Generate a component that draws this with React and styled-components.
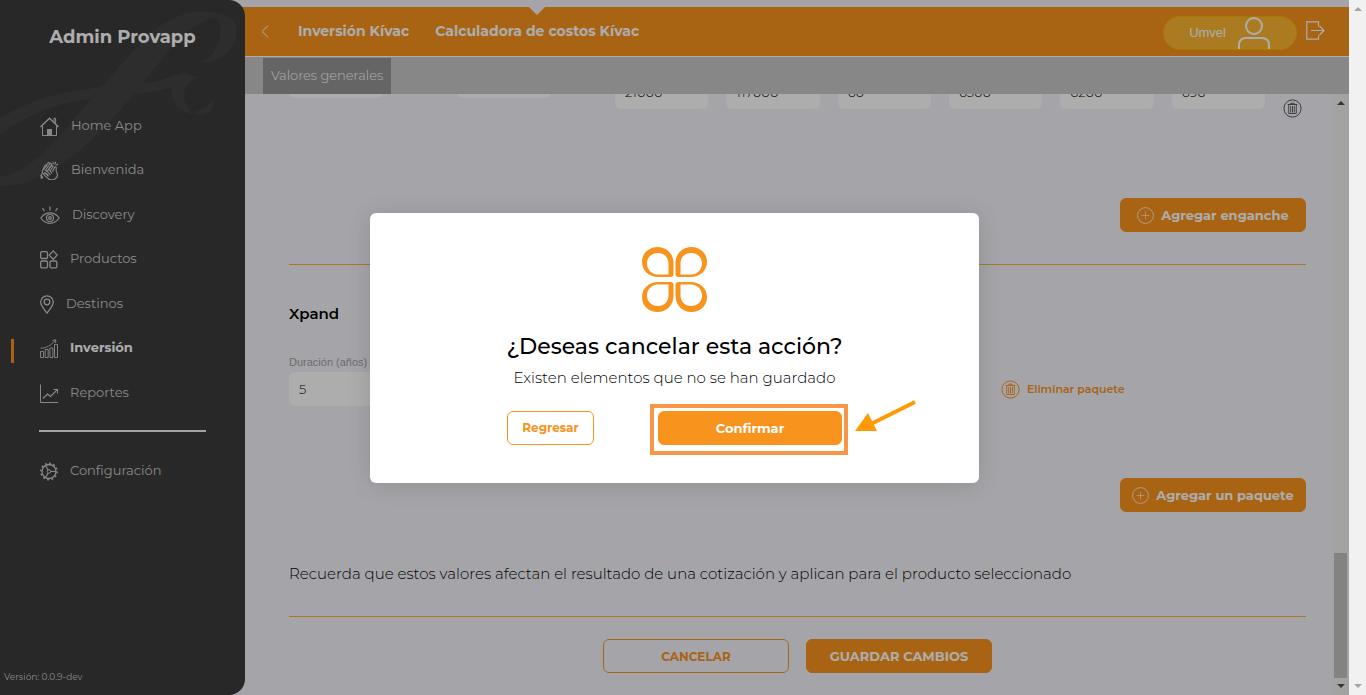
import React from 'react'
import styled, { createGlobalStyle } from 'styled-components'

const orange = '#f8931d'

const navItems = [
  { label: 'Home App', icon: 'home' },
  { label: 'Bienvenida', icon: 'hands' },
  { label: 'Discovery', icon: 'eye' },
  { label: 'Productos', icon: 'grid' },
  { label: 'Destinos', icon: 'pin' },
  { label: 'Inversión', icon: 'bars', active: true },
  { label: 'Reportes', icon: 'report' },
]

const baseValues = ['', '']
const engancheValues = ['21000', '117000', '60', '6500', '6200', '690']

const icons = {
  home: (
    <svg width="19" height="19" viewBox="0 0 19 19" fill="none" stroke="currentColor">
      <path d="M0.5 10 9.5 1.2l9 8.8" strokeWidth="1.4" />
      <path d="M2.5 9v9.5h14V9" />
      <path d="M14 5V1.2h1.6v5.4" />
      <rect x="7" y="12" width="5" height="7" fill="currentColor" stroke="none" />
    </svg>
  ),
  hands: (
    <svg width="19" height="19" viewBox="0 0 19 19" fill="none" stroke="currentColor" strokeWidth="1.1" strokeLinecap="round" strokeLinejoin="round">
      <path d="M1 14.5c1-1 1.500-2 1.500-4 0-1 .3-2 .8-2.800L5 4.500c.8-1.300 2.400-.5 1.800.8M6.500 4 7.800 2.200c.8-1.200 2.500-.3 2 .9M9.200 3.500l.6-.6c1-1 2.500.1 1.700 1.300L9 8" />
      <path d="M5.200 9.500 9 4.500M3.600 8.500l3-4M7 10.500l4-5.300c1-1.200 2.300-.2 1.600 1l-2.200 3.300M12.700 10.500l1.600-3.800c.6-1.400 2.300-.7 2 .6-.5 2-.1 3.700.8 5.200 1 2.200-.6 5.400-4 6.200-2.700.6-4.300-.4-5.400-1.600l-3.600-3.300c-1.200-1.200.2-2.500 1.400-1.700l2.300 1.700" />
      <path d="m5 12 3.300 3M6.200 9.700l4 4M8.500 8.500l3.400 3.700M1.200 14.200l1.500 2.600-1.500.5z" />
      <path d="m13 1 .4 1.800M15.500 1.200 15 3M17.600 3.300l-1.500.7" />
    </svg>
  ),
  eye: (
    <svg width="20" height="19" viewBox="0 0 20 19" fill="none" stroke="currentColor" strokeWidth="1.200">
      <path d="M.8 12C3.500 8.300 6.500 6.800 10 6.800s6.500 1.500 9.200 5.200c-2.700 3.700-5.700 5.300-9.200 5.300S3.500 15.700.8 12z" />
      <circle cx="10" cy="12" r="3.500" />
      <circle cx="10" cy="12" r="1.300" />
      <path d="M10 .5v4M2.500 2l2 3.200M17.500 2l-2 3.200" />
    </svg>
  ),
  grid: (
    <svg width="18" height="19" viewBox="0 0 18 19" fill="none" stroke="currentColor" strokeWidth="1.300">
      <rect x=".7" y="1.700" width="6.800" height="6.800" rx="1.200" />
      <rect x=".7" y="11" width="6.800" height="6.800" rx="1.200" />
      <rect x="10" y="11" width="6.800" height="6.800" rx="1.200" />
      <path d="m13.200.9 4 4.200-4 4.200-4-4.200z" strokeLinejoin="round" />
    </svg>
  ),
  pin: (
    <svg width="14" height="19" viewBox="0 0 14 19" fill="none" stroke="currentColor" strokeWidth="1.300">
      <path d="M7 18C4 14 .7 10.600.7 7.200a6.300 6.300 0 0 1 12.600 0C13.300 10.600 10 14 7 18z" />
      <circle cx="7" cy="7" r="2.800" />
    </svg>
  ),
  bars: (
    <svg width="18" height="19" viewBox="0 0 18 19" fill="none" stroke="currentColor" strokeWidth=".9">
      <path d="M.5 12.500h3v6h-3zM5.200 10.500h3v8h-3zM9.900 9h3v9.500h-3zM14.500 5.500h3v13h-3z" />
      <path d="M.5 9.300c6-.2 10.500-3 15-8M12.300 1.500l3.500-.7-.2 3.400" />
    </svg>
  ),
  report: (
    <svg width="18" height="19" viewBox="0 0 18 19" fill="none" stroke="currentColor">
      <path d="M.5.500v18H18" />
      <path d="m3 14.500 4.500-4.500 3 2.500 7-7M13.500 5.500h4v4" strokeWidth="1.100" />
    </svg>
  ),
  gear: (
    <svg width="18" height="19" viewBox="0 0 18 19" fill="none" stroke="currentColor">
      <circle cx="9" cy="9.500" r="7" strokeWidth="1.300" />
      <circle cx="9" cy="9.500" r="8.200" strokeWidth="1.500" strokeDasharray="1.800 2.490" />
      <circle cx="9" cy="9.500" r="1.700" />
      <path d="M10.700 9.500H16M8.100 8 5.500 3.500M8.100 11l-2.600 4.500" strokeWidth="1.200" />
    </svg>
  ),
}

const TrashIcon = () => (
  <svg width="19" height="19" viewBox="0 0 19 19" fill="none" stroke="currentColor" aria-hidden="true">
    <circle cx="9.500" cy="9.500" r="8.600" />
    <path d="M4.800 5.500h9.400M7.800 5.300V4.200h3.400v1.100" />
    <path d="M5.700 6v8.500h7.600V6M7.700 7v6.500M9.500 7v6.500M11.300 7v6.500" strokeWidth=".9" />
  </svg>
)

const PlusIcon = () => (
  <svg width="17" height="17" viewBox="0 0 17 17" fill="none" stroke="currentColor" aria-hidden="true">
    <circle cx="8.500" cy="8.500" r="7.900" strokeWidth=".8" />
    <path d="M8.500 4.500v8M4.500 8.500h8" strokeWidth=".6" />
  </svg>
)

const petal = 'M28.500 30H16C7 30 0 23.500 0 15 0 6 7 0 15.800 0S31.500 7 31.500 16v11c0 2-1 3-3 3zM26.500 27.500V17C26.500 10.500 22.500 6 16 6S5 10.500 5 16.500s4.500 11 11 11z'

const CloverLogo = () => (
  <svg width="65" height="65" viewBox="0 0 65 65" fill={orange} fillRule="evenodd" aria-hidden="true">
    <path d={petal} />
    <path d={petal} transform="translate(65 0) scale(-1 1)" />
    <path d={petal} transform="translate(0 65) scale(1 -1)" />
    <path d={petal} transform="translate(65 65) scale(-1 -1)" />
  </svg>
)

const App = () => {
  return (
    <Page>
      <GlobalStyle />
      <Screen>
        <Sidebar>
          <Swash viewBox="0 0 735 560" aria-hidden="true">
            <path d="M0 530C110 515 200 380 300 265L430 120C500 50 580 22 650 38 712 50 712 85 710 100 700 160 650 192 595 190 650 170 675 110 655 52 560 60 480 190 400 285 300 400 160 560 0 558z" />
            <path d="M0 355C100 295 200 270 305 262L270 297C150 310 60 360 0 403z" />
            <path d="M425 252C470 248 500 235 550 217L597 233C550 240 535 300 580 342 530 335 510 300 515 260 480 272 440 278 402 283z" />
            <path d="M580 335C615 330 635 310 640 290 645 325 630 345 600 345z" />
          </Swash>
          <Brand>Admin Provapp</Brand>
          <Nav>
            {navItems.map((item) => (
              <NavLink href="#" key={item.label} $active={item.active}>
                {icons[item.icon]}
                <span>{item.label}</span>
              </NavLink>
            ))}
          </Nav>
          <Divider />
          <NavLink href="#">
            {icons.gear}
            <span>Configuración</span>
          </NavLink>
          <Version>Versión: 0.0.9-dev</Version>
        </Sidebar>

        <Main>
          <Header>
            <BackButton aria-label="Volver">
              <svg width="8" height="13" viewBox="0 0 8 13" fill="none" stroke="currentColor">
                <path d="M7.200.5 1 6.500l6.200 6" />
              </svg>
            </BackButton>
            <Crumb href="#">Inversión Kívac</Crumb>
            <Crumb href="#" $current>Calculadora de costos Kívac</Crumb>
            <UserPill>
              Umvel
              <svg width="32" height="32" viewBox="0 0 32 32" fill="none" stroke="currentColor" strokeWidth="2">
                <circle cx="16" cy="9" r="8" />
                <path d="M1 32v-3.500c0-5 3-7.500 7-7.500h16c4 0 7 2.500 7 7.500V32" />
              </svg>
            </UserPill>
            <LogoutButton aria-label="Salir">
              <svg width="19" height="19" viewBox="0 0 19 19" fill="none" stroke="currentColor" strokeWidth="1.200">
                <path d="M12.500 5.500V.8H.8v17.400h11.700v-4M5 9.500h13M13.500 5l4.500 4.500-4.500 4.500" />
              </svg>
            </LogoutButton>
          </Header>
          <TabBar>
            <Tab>Valores generales</Tab>
          </TabBar>

          <Body>
            <Content>
              <EngancheRow>
                <BaseFields>
                  {baseValues.map((value, i) => (
                    <Input key={i} defaultValue={value} aria-label={`Base ${i + 1}`} />
                  ))}
                </BaseFields>
                <PlanFields>
                  {engancheValues.map((value, i) => (
                    <Input key={i} defaultValue={value} aria-label={`Enganche ${i + 1}`} />
                  ))}
                </PlanFields>
                <IconButton aria-label="Eliminar enganche">
                  <TrashIcon />
                </IconButton>
              </EngancheRow>
              <AddRow>
                <Button><PlusIcon />Agregar enganche</Button>
              </AddRow>
              <Rule />
              <SectionTitle>Xpand</SectionTitle>
              <PackageRow>
                <Field>
                  <Label htmlFor="duracion">Duración (años)</Label>
                  <Input id="duracion" defaultValue="5" />
                </Field>
                <RemoveButton><TrashIcon />Eliminar paquete</RemoveButton>
              </PackageRow>
              <AddRow>
                <Button><PlusIcon />Agregar un paquete</Button>
              </AddRow>
              <Note>Recuerda que estos valores afectan el resultado de una cotización y aplican para el producto seleccionado</Note>
              <Rule />
              <FooterActions>
                <Button $outline>CANCELAR</Button>
                <Button>GUARDAR CAMBIOS</Button>
              </FooterActions>
            </Content>
            <ScrollBar $dark>
              <Arrow $up />
              <Thumb />
              <Arrow />
            </ScrollBar>
          </Body>
        </Main>

        <Backdrop>
          <Modal role="dialog" aria-modal="true" aria-labelledby="modal-title">
            <CloverLogo />
            <ModalTitle id="modal-title">¿Deseas cancelar esta acción?</ModalTitle>
            <ModalText>Existen elementos que no se han guardado</ModalText>
            <ModalActions>
              <ModalButton $outline>Regresar</ModalButton>
              <ConfirmHolder>
                <ModalButton $wide>Confirmar</ModalButton>
                <Highlight />
                <Pointer viewBox="0 0 62 34" aria-hidden="true">
                  <path d="M60 2 16 24" stroke="#ff9a05" strokeWidth="4" />
                  <path d="M0 31 13 13l9 18z" fill="#ff9a05" />
                </Pointer>
              </ConfirmHolder>
            </ModalActions>
          </Modal>
        </Backdrop>
      </Screen>
      <ScrollBar>
        <Arrow $up />
        <Arrow />
      </ScrollBar>
    </Page>
  )
}

export default App

const GlobalStyle = createGlobalStyle`
* {
  box-sizing: border-box;
}
body {
  margin: 0;
  font-family: Montserrat, Inter, sans-serif;
}
button, input {
  font-family: inherit;
  margin: 0;
}
button {
  cursor: pointer;
}
svg {
  flex-shrink: 0;
}
`

const Page = styled.div`
display: flex;
height: 100vh;
background: #f3f4fa;
`

const Screen = styled.div`
position: relative;
display: flex;
flex: 1;
min-width: 0;
`

const Sidebar = styled.aside`
position: relative;
display: flex;
flex-direction: column;
width: 245px;
flex-shrink: 0;
background: #3b3b3b;
border-radius: 0 16px 16px 0;
color: #cacaca;
overflow: hidden;
`

const Swash = styled.svg`
position: absolute;
top: 0;
left: 0;
width: 100%;
fill: #434343;
`

const Brand = styled.h1`
position: relative;
margin: 25px 0 65px;
font-size: 18px;
line-height: 24px;
font-weight: 700;
text-align: center;
color: #fff;
`

const Nav = styled.nav`
position: relative;
display: flex;
flex-direction: column;
justify-content: space-between;
height: 291px;
`

const NavLink = styled.a`
display: flex;
align-items: center;
gap: 12px;
height: 24px;
padding-left: ${(props) => (props.$active ? '11px' : '40px')};
font-size: 13px;
line-height: 20px;
font-weight: ${(props) => (props.$active ? 700 : 400)};
text-decoration: none;
color: #cacaca;
&::before {
  content: '';
  display: ${(props) => (props.$active ? 'block' : 'none')};
  width: 3px;
  height: 24px;
  margin: 4px 14px 0 0;
  background: ${orange};
}
span {
  padding-bottom: 3px;
  color: ${(props) => (props.$active ? '#fff' : '#cacaca')};
}
`

const Divider = styled.hr`
width: 167px;
margin: 25px 39px 27px;
border: 0;
border-top: 2px solid #f0f0f0;
`

const Version = styled.small`
margin-top: auto;
padding: 0 4px 11px;
font-size: 9px;
line-height: 14px;
`

const Main = styled.main`
display: flex;
flex-direction: column;
flex: 1;
min-width: 0;
padding-top: 7px;
`

const Header = styled.header`
display: flex;
align-items: center;
height: 50px;
/* fills the gap behind the rounded sidebar corner */
margin-left: -4px;
padding: 0 24px 0 20px;
background: ${orange};
border-bottom: 1px solid #fff;
color: #fff;
`

const BackButton = styled.button`
display: flex;
padding: 0;
margin-right: 29px;
border: 0;
background: none;
color: #fff;
`

const Crumb = styled.a`
position: relative;
height: 49px;
margin-right: 26px;
font-size: 14px;
line-height: 48px;
font-weight: 700;
text-decoration: none;
white-space: nowrap;
color: #fff;
&::before {
  content: '';
  display: ${(props) => (props.$current ? 'block' : 'none')};
  position: absolute;
  top: 0;
  left: 50%;
  margin-left: -8px;
  border: 8px solid transparent;
  border-top-color: #f3f4fa;
  border-bottom: 0;
}
`

const UserPill = styled.button`
display: flex;
align-items: center;
justify-content: flex-end;
gap: 12px;
width: 134px;
height: 34px;
margin: 2px 0 0 auto;
padding: 0 26px 0 0;
border: 1px solid #fbb400;
border-radius: 17px;
background: #fdb632;
font-family: 'Liberation Sans', Arial, sans-serif;
font-size: 13px;
color: #fff;
`

const LogoutButton = styled.button`
display: flex;
margin-left: 9px;
padding: 0 0 3px;
border: 0;
background: none;
color: #fff;
`

const TabBar = styled.div`
display: flex;
height: 37px;
flex-shrink: 0;
padding: 1px 18px 0;
background: #c8c8c8;
`

const Tab = styled.button`
width: 128px;
padding: 0 0 2px;
border: 0;
background: #969696;
font-size: 13px;
font-weight: 300;
white-space: nowrap;
color: #fff;
`

const Body = styled.div`
display: flex;
flex: 1;
min-height: 0;
`

const Content = styled.div`
display: flex;
flex-direction: column;
justify-content: flex-end;
flex: 1;
min-width: 0;
padding: 0 26px 22px 44px;
overflow: hidden;
`

const EngancheRow = styled.div`
display: flex;
align-items: flex-end;
padding-right: 4px;
margin-bottom: 80px;
`

const Input = styled.input`
width: 94px;
height: 34px;
padding: 0 10px;
border: 0;
border-radius: 6px;
background: #fff;
font-size: 13px;
font-weight: 300;
color: #000;
`

const BaseFields = styled.div`
display: flex;
gap: 74px;
margin: 0 64px 20px 0;
`

const PlanFields = styled.div`
display: flex;
flex: 1;
min-width: 0;
gap: 18px;
margin: 0 18px 9px 0;
${Input} {
  flex: 1;
  min-width: 0;
}
`

const IconButton = styled.button`
display: flex;
padding: 0;
border: 0;
background: none;
color: #555;
`

const AddRow = styled.div`
display: flex;
justify-content: flex-end;
`

const Button = styled.button`
display: flex;
align-items: center;
justify-content: center;
gap: 7px;
width: 186px;
height: 34px;
padding: 0;
border: 1px solid ${orange};
border-radius: 6px;
background: ${(props) => (props.$outline ? 'transparent' : orange)};
font-size: ${(props) => (props.$outline ? '12px' : '13px')};
font-weight: 700;
white-space: nowrap;
color: ${(props) => (props.$outline ? orange : '#fff')};
`

const Rule = styled.hr`
width: 100%;
margin: 32px 0 0;
border: 0;
border-top: 1px solid #ffb22c;
`

const SectionTitle = styled.h2`
margin: 39px 0 0;
font-size: 15px;
line-height: 20px;
font-weight: 600;
`

const PackageRow = styled.div`
display: grid;
grid-template-columns: 7fr 3fr;
align-items: end;
margin: 28px 0 72px;
`

const Field = styled.div`
display: flex;
flex-direction: column;
`

const Label = styled.label`
font-family: 'Liberation Sans', Arial, sans-serif;
font-size: 11px;
line-height: 20px;
color: #a0a0a0;
`

const RemoveButton = styled.button`
display: flex;
align-items: center;
gap: 7px;
height: 34px;
padding: 0;
border: 0;
background: none;
font-size: 11px;
font-weight: 600;
color: ${orange};
`

const Note = styled.p`
margin: 52px 0 0;
font-size: 15px;
line-height: 20px;
font-weight: 300;
color: #000;
`

const FooterActions = styled.div`
display: flex;
justify-content: center;
gap: 17px;
margin-top: 22px;
`

const ScrollBar = styled.div`
display: flex;
flex-direction: column;
align-items: center;
justify-content: space-between;
width: 17px;
flex-shrink: 0;
padding: 7px 0;
background: #f1f1f1;
color: ${(props) => (props.$dark ? '#505050' : '#a3a3a3')};
`

const Arrow = styled.i`
border: 4px solid transparent;
border-top: ${(props) => (props.$up ? '0' : '4px solid currentColor')};
border-bottom: ${(props) => (props.$up ? '4px solid currentColor' : '0')};
`

const Thumb = styled.div`
width: 13px;
height: 125px;
margin: auto 0 6px;
background: #c1c1c1;
`

const Backdrop = styled.div`
position: absolute;
inset: 0;
display: flex;
align-items: center;
justify-content: center;
background: rgba(0, 0, 0, 0.32);
`

const Modal = styled.div`
display: flex;
flex-direction: column;
align-items: center;
width: 609px;
max-width: 90%;
padding: 34px 24px 38px;
border-radius: 6px;
background: #fff;
box-shadow: 0 2px 24px rgba(0, 0, 0, 0.12);
`

const ModalTitle = styled.h2`
margin: 21px 0 0;
font-size: 22px;
line-height: 28px;
font-weight: 500;
white-space: nowrap;
`

const ModalText = styled.p`
margin: 7px 0 23px;
font-size: 15px;
line-height: 20px;
font-weight: 300;
color: #000;
`

const ModalActions = styled.div`
display: flex;
justify-content: space-between;
width: 335px;
`

const ModalButton = styled(Button)`
width: ${(props) => (props.$wide ? '184px' : '87px')};
`

const ConfirmHolder = styled.div`
position: relative;
`

const Highlight = styled.span`
position: absolute;
inset: -7px -6px -10px -8px;
border: 4px solid #f79646;
pointer-events: none;
`

const Pointer = styled.svg`
position: absolute;
top: -11px;
left: 197px;
width: 62px;
fill: none;
`
